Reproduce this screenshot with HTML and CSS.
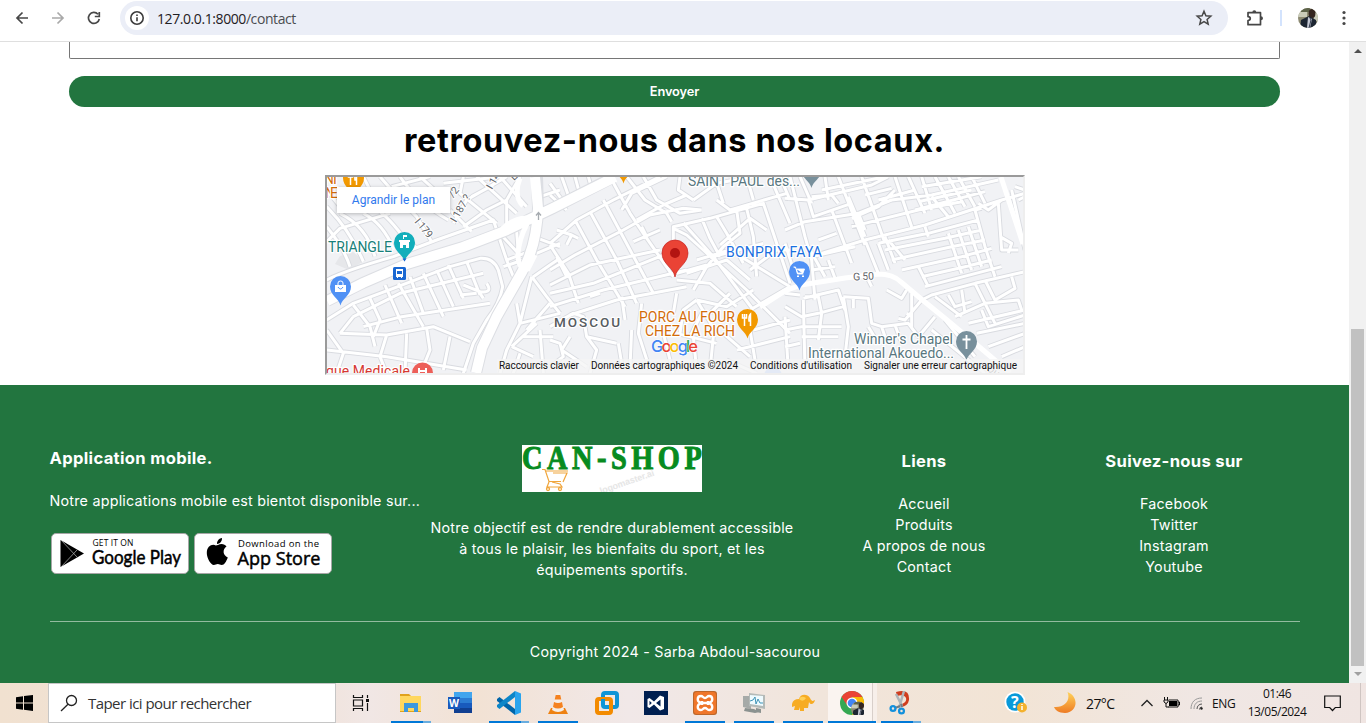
FILE: index.html
```html
<!DOCTYPE html>
<html lang="fr">
<head>
<meta charset="utf-8">
<title>Contact</title>
<link rel="stylesheet" href="styles.css">
</head>
<body>
<header class="toolbar">
  <svg class="nav" width="108" height="36" viewBox="0 0 108 36" fill="none" stroke="#474747" stroke-width="1.7">
    <path d="M28 18H17M22.500 12.500 17 18l5.500 5.500"/>
    <path d="M52 18h11M57.500 12.500 63 18l-5.500 5.500" stroke="#a9a9a9"/>
    <path d="M99.300 19A5.500 5.500 0 1 1 98 14.200M99.300 12v4.500h-4.500"/>
  </svg>
  <div class="address">
    <span class="site-info"><svg width="16" height="16" viewBox="0 0 16 16" fill="none" stroke="#3c3c3c" stroke-width="1.6"><circle cx="8" cy="8" r="6.200"/><path d="M8 7.200v4M8 4.400v1.600"/></svg></span>
    <span class="url">127.0.0.1:8000<i>/contact</i></span>
    <svg class="star" width="18" height="18" viewBox="0 0 18 18"><path d="m9 2.300 1.900 4.500 4.900.4-3.700 3.200 1.100 4.800L9 12.700l-4.200 2.500 1.100-4.800-3.700-3.200 4.900-.4z" fill="none" stroke="#474747" stroke-width="1.500"/></svg>
  </div>
  <svg class="puzzle" width="20" height="20" viewBox="0 0 20 20"><path d="M3 4.700h12.500v12H3v-4.200c3-.2 3-3.600 0-3.800z" fill="none" stroke="#474747" stroke-width="1.700" stroke-linejoin="round"/><path d="M7.300 4.500a2 2.200 0 0 1 4 0zM15.800 8.200a2.200 2 0 0 1 0 4z" fill="#474747"/></svg>
  <span class="divider"></span>
  <svg class="avatar" width="20" height="20" viewBox="0 0 20 20"><use href="#portrait"/></svg>
  <svg class="dots" width="6" height="18" viewBox="0 0 6 18" fill="#474747"><circle cx="3" cy="3.500" r="1.600"/><circle cx="3" cy="9" r="1.600"/><circle cx="3" cy="14.500" r="1.600"/></svg>
</header>

<div class="viewport">
  <main class="page">
    <div class="field"></div>
    <button class="send">Envoyer</button>
    <h1>retrouvez-nous dans nos locaux.</h1>
    <div class="map">
      <svg width="696" height="196" viewBox="327 177 696 196">
        <defs>
          <g id="portrait">
            <clipPath id="round"><circle cx="10" cy="10" r="10"/></clipPath>
            <g clip-path="url(#round)"><path fill="#8c8a72" d="M0 0h20v20H0z"/><path fill="#c9cbb8" d="M0 2h9v7H0zM16 5h4v8h-4z"/><path fill="#5d6349" d="M3 0h9v4H3z"/><ellipse cx="14" cy="5.500" rx="3.400" ry="4.500" fill="#34251f"/><path d="M2 20l1-8 8-4 7 4 1 8z" fill="#1c2532"/><path d="m10 9 4 2-2 9H9z" fill="#c5c9d5"/><path d="m12 10 1 2-2 8" stroke="#30394a" fill="none"/></g>
          </g>
          <g id="minor">
            <g transform="translate(320 170) scale(.33333)">
              <path d="M20 170Q70 230 90 290M20 110Q90 180 130 275M20 215L60 175 210 130M60 130Q140 170 165 260M130 130Q190 160 222 240M180 125Q215 150 275 235M20 60L60 110M130 20L150 60M180 20Q240 90 290 140L335 215M240 20Q290 95 385 150M300 20L350 65M215 50L330 20M430 20L420 70 530 160M370 40L540 20M400 160L440 90 560 20M430 170L500 120 560 90M470 20L590 130M455 80L520 45M390 120L455 185M540 20L620 110M600 20L560 90 560 160"/>
              <path d="M20 330Q80 300 220 260L350 210 520 150 530 180M290 235L275 220M20 450L100 400 220 355 390 290 480 265Q520 262 535 300L548 350Q540 400 500 450L460 520 430 610M590 185L595 250 530 180 560 270 640 240M550 290L610 270M560 270L580 320"/>
              <path d="M100 405L150 470 165 530M150 385L180 450 160 500M195 345L245 460M235 340L310 470M270 320L310 430M310 310L370 440M350 300L400 410M385 285L430 385M440 275L480 375M100 440L240 370 490 310M130 470L245 440 510 400M60 490L100 440M20 480L70 550 50 610M60 490L200 495 340 470 450 515M20 540L200 560 440 600M200 495L180 560 200 610M260 490L255 610M320 475L330 540 310 590M390 500L370 600M430 345L480 365Q520 370 500 340M420 375L470 370M480 370L490 385"/>
              <path d="M640 320L690 285 720 265M635 320L680 380 720 430M635 320L610 420 600 460M590 400L600 460M600 460L720 430M600 460L560 540 540 610M575 530L650 460M575 530L640 560M600 550L580 610M660 480L670 610M610 500L700 500M690 400L620 480M650 250L720 220M640 200L720 230M660 80L720 60"/>
            </g>
            <g transform="translate(550 170) scale(.33333)">
              <path d="M0 75L50 120M0 40L40 95M35 20L60 90M75 20L90 75M115 20L125 55M0 220L80 150 190 90 330 20M20 180L65 195 85 205M65 195L50 225M0 300L75 255 220 180 300 135 400 115 455 120M0 345L120 285 330 240M0 370L130 340 390 235M0 410L160 360 410 300M60 435L200 390 410 350M75 150L140 270 225 410M0 225L55 310 85 400M120 125L200 270 260 400M160 90L310 370M180 20L240 130 280 190 370 320M230 20L285 90 350 130 365 155M280 20L320 90 390 130 455 120M215 120L245 70 350 20M260 150L340 105 410 75M250 215L330 180M275 170L290 200M390 20L385 60 430 90M20 260L50 320M120 380L150 370M215 380L225 450"/>
              <path d="M370 210V170L480 145 640 100 670 190 720 340M370 175L410 195 460 240 590 360 720 490M400 160L490 260 610 420M455 145L480 205 510 260M500 140L530 190 580 280M560 120L570 190 520 230 470 290 430 360M590 115L610 200 620 320M510 225L600 145 650 180M490 260L640 220M440 270L540 240 720 350M470 285L380 310M410 310L530 270 600 330M380 330L480 340 560 410M600 300L680 240 720 240M610 360L530 410 440 390M440 390L500 490M460 420L420 500M540 370L480 430M600 420L720 350M610 480L720 450M520 490L600 560M560 540L720 500M530 570L620 610M600 480L620 600M430 90L500 40 610 20M500 90L540 120 710 70M500 40L520 100M590 20L610 90M660 20L720 160M690 20L720 90"/>
              <path d="M0 470L70 430 100 440 110 500 140 540 120 610M0 510L30 520 40 560 0 590M60 500L35 540 110 590M110 500L200 520M205 520L215 580M245 480L240 590M275 400L265 490 300 600M380 370L370 430M440 390L400 420 390 490M340 490L370 610M380 490L500 520M430 500L440 600M490 500L480 600"/>
            </g>
            <g transform="translate(785 170) scale(.33333)">
              <path d="M15 20L60 200 80 270 90 390M0 85L70 90 260 45 310 20M70 90L85 140 200 100M80 80L140 75 160 100M45 20L80 100M120 20L130 90M160 20L240 225M110 60L300 20M190 80L240 200M230 20L300 220M0 180L60 155 220 130 320 90 440 75 640 30M100 210L155 190M110 250L240 210 420 165 650 90 720 70M140 120L200 280M80 260L210 230M70 230L120 320M200 145L280 110 330 60M220 130L240 180M240 210L280 310M200 170L400 120 530 95M330 20L380 170M370 20L420 130M410 20L440 120M450 20L510 130M490 20L540 110M520 20L570 110M560 20L600 100M240 75L320 55M280 90L390 60M400 95L560 60M390 120L600 65M410 50L590 20M440 80L490 140M650 90L610 120 580 100M590 115L570 120 600 230 630 320M640 100L650 240 700 240M645 200L680 220 670 250M420 170L430 200M280 220L310 300M300 200L330 280M310 210L360 270M280 220L430 190 580 150M300 240L480 205 590 180M320 270L500 230 600 210M350 300L530 260 620 235M410 320L540 290 620 270M420 350L650 290M400 290L430 350M490 190L530 310M520 180L560 300M550 170L590 290"/>
              <path d="M410 390L440 375 570 340 720 305M450 380L530 440M490 375L510 410 560 395M530 360L540 430M570 340L630 460M600 330L630 390 690 355 680 320M510 440L600 400 700 390 710 420M590 420L610 470 720 435M550 460L720 420M575 490L720 460M610 530L720 490M650 560L720 530M410 390L360 450 340 445M380 370V470M305 360L350 385 365 360M365 430L380 440M450 440L400 500 370 460 290 470 260 460 250 385 175 380M205 385V415M175 380L190 470 180 560M55 385L160 360 180 420M0 410L50 440 100 430 175 410M60 380L100 380 110 430 100 510M0 480L50 470 170 470M50 500L160 500M0 530L45 520M55 390L60 600M0 440L10 600M250 470L280 520M290 470L300 500M330 465L350 520M250 330L260 350M130 270L150 325M0 220L40 345M80 300L150 290M0 370L45 375M480 450L570 560M440 480L600 610"/>
              <path d="M680 60L720 240M700 90L720 80M690 50L720 60"/>
            </g>
          </g>
        </defs>
        <path fill="#f1f2f5" d="M327 177h696v196H327z"/>
        <path fill="#e6e7ea" d="m340 256 13-4 11 9-15 9-14-6z"/>
        <use href="#minor" class="road road-edge"/>
        <use href="#minor" class="road"/>
        <g class="major">
          <path class="edge" d="M327 301 363 283 407 264 463 247 505 231 553 208 610 179M537 177 538 208Q537 245 522 272L497 316 482 348 476 373"/>
          <path d="M327 301 363 283 407 264 463 247 505 231 553 208 615 177M535 177 538 208Q537 245 522 272L497 316 482 348 476 373"/>
          <path class="medium" d="M785 291 801 285 845 278 878 274Q893 274 901 282L920 298 947 320 983 350 1010 373M1001 177 1023 244M760 307 785 291M502 229Q512 219 526 218"/>
          <path d="M520 178q-7 18 3 28M527 224q-8 15-9 30 0 16 10 15l7-14" class="medium"/>
        </g>
        <path d="M538.500 220v-7m-2.500 2.500 2.500-3 2.500 3" stroke="#a6abb0" fill="none" stroke-width="1.300"/>
        <g class="street">
          <text transform="translate(414 222) rotate(50)" textLength="22">I 179</text>
          <text transform="translate(456 223) rotate(-60)" textLength="30">I 187 ?</text>
          <text transform="translate(453 198) rotate(-50)" textLength="10">/2</text>
          <text transform="translate(492 190) rotate(-60)" textLength="23">I 145</text>
          <text transform="translate(514 181) rotate(-45)">L</text>
          <text x="853" y="280" textLength="21" transform="rotate(-3 863 276)">G 50</text>
          <text x="986" y="370" transform="rotate(35 986 370)">Ou</text>
        </g>
        <g class="place">
          <g fill="#d26c0a"><text x="324" y="184" textLength="15">NT</text><text x="325" y="198" textLength="13">NE</text><text x="639" y="322" textLength="96">PORC AU FOUR</text><text x="645" y="336" textLength="90">CHEZ LA RICH</text></g>
          <g fill="#188079"><text x="328" y="252" textLength="64">TRIANGLE</text></g>
          <g fill="#196fe0"><text x="726" y="257" textLength="96">BONPRIX FAYA</text></g>
          <g fill="#597780"><text x="688" y="186" textLength="112">SAINT PAUL des...</text><text x="854" y="344" textLength="99">Winner's Chapel</text><text x="808" y="358" textLength="146">International Akouedo...</text></g>
          <g fill="#d63832"><text x="326" y="376" textLength="84">que Medicale</text></g>
          <text x="554" y="327" textLength="66" class="district">MOSCOU</text>
        </g>
        <defs><path id="pin" d="M0 19C-1.500 12-10.500 9-10.500 0a10.500 10.500 0 0 1 21 0C10.500 9 1.500 12 0 19z"/></defs>
        <use href="#pin" fill="#12aebb" x="404.500" y="242.500"/><path d="M402.500 258.500h4l-2 3z" fill="#1967d2"/><path d="M399 240h11v2h-1v6h-3v-3h-3v3h-3v-6h-1zM403 239v-4h4v2h-3v2z" fill="#fff"/>
        <use href="#pin" fill="#5091f5" x="340.500" y="286.500"/><path d="M335 285h11v7h-11z" fill="#fff"/><path d="M338 285v-2a2.500 2 0 0 1 5 0v2" stroke="#fff" fill="none"/><path d="M338 287q2.500 4 5 0" stroke="#5091f5" fill="none"/>
        <use href="#pin" fill="#5091f5" x="799.500" y="271.500"/><path d="M793.500 267h2l2 7h6M796.500 269h8l-1.500 4h-5.500z" stroke="#fff" stroke-width=".9" fill="#fff"/><path d="M797 275.500h2v1.500h-2zM802 275.500h2v1.500h-2z" fill="#fff"/>
        <use href="#pin" fill="#f29900" x="747.500" y="319.500"/><g id="fork" stroke="#fff" fill="none" stroke-width="1.500"><path d="M742.500 314v4h4v-4M744.500 314v12M750.500 326v-12q-2 2-1.500 7h1.500"/></g>
        <use href="#pin" fill="#f29900" x="353.500" y="178"/><use href="#fork" x="-394" y="-141"/>
        <use href="#pin" fill="#f29900" x="623.500" y="164.500"/><use href="#pin" fill="#78909c" x="811.500" y="169"/>
        <use href="#pin" fill="#78909c" x="966.500" y="341.500"/><path d="M966.500 335v14M962.500 339.500h8" stroke="#fff" stroke-width="1.800"/>
        <use href="#pin" fill="#ed5f59" x="422.500" y="373"/><path d="M419 368v8m7-8v8m-7-5h7" stroke="#fff" stroke-width="2"/>
        <circle cx="773" cy="376" r="9" fill="#a9c5fa"/>
        <rect x="393" y="267" width="13" height="13" rx="1.500" fill="#1967d2"/><path d="M396 269h7v8h-1v1h-1v-1h-3v1h-1v-1h-1z" fill="#fff"/><path d="M397 271h5v3h-5z" fill="#1967d2"/>
        <path d="M675 277C674 268 662 264 662 253a13 13 0 0 1 26 0C688 264 676 268 675 277z" fill="#ea4335" stroke="#c5221f" stroke-width=".7"/><circle cx="675" cy="253" r="5" fill="#b31412"/>
        <text class="google" x="651" y="351.500" textLength="47"><tspan fill="#4285f4">G</tspan><tspan fill="#ea4335">o</tspan><tspan fill="#fbbc04">o</tspan><tspan fill="#4285f4">g</tspan><tspan fill="#34a853">l</tspan><tspan fill="#ea4335">e</tspan></text>
        <path d="M497 359h526v14H497z" fill="#f5f5f5" opacity=".78"/>
        <g class="legal"><text x="499" y="369" textLength="80">Raccourcis clavier</text><text x="591" y="369" textLength="147">Données cartographiques ©2024</text><text x="750" y="369" textLength="102">Conditions d'utilisation</text><text x="864" y="369" textLength="153">Signaler une erreur cartographique</text></g>
      </svg>
      <a class="enlarge">Agrandir le plan</a>
    </div>
    <footer>
      <div class="columns">
        <section class="apps">
          <h3>Application mobile.</h3>
          <p>Notre applications mobile est bientot disponible sur...</p>
          <div class="badges">
            <svg width="138" height="41" viewBox="0 0 138 41"><rect x=".5" y=".5" width="137" height="40" rx="4.500" fill="#fff" stroke="#a6a6a6"/><path d="M9.500 7 33 20.500 9.500 34z"/><path d="m10 7 16 17M10 34 26 17" stroke="#bbb" stroke-width=".7"/><text x="41.500" y="13" font-size="8.500" textLength="41">GET IT ON</text><text x="41" y="31" class="brand" textLength="89" lengthAdjust="spacingAndGlyphs">Google Play</text></svg>
            <svg width="138" height="41" viewBox="0 0 138 41"><rect x=".5" y=".5" width="137" height="40" rx="4.500" fill="#fff" stroke="#a6a6a6"/><path d="M24 12c3-2 7-1 8.500 1.500-4.500 3-3.500 9 1.300 11-1.500 4-3.500 7.500-6 7.500-1.800 0-2.300-1-4-1s-2.300 1-4 1c-3 0-7-7-7-12 0-7 5.500-9.500 9-7.500zM23 11c-.2-3.300 2.500-5.800 5-6 .3 3-2.200 6-5 6z"/><text x="44" y="13.500" font-size="9.500" textLength="81">Download on the</text><text x="43.500" y="32" class="brand store" textLength="83" lengthAdjust="spacingAndGlyphs">App Store</text></svg>
          </div>
        </section>
        <section class="about">
          <svg class="logo" width="180" height="47" viewBox="0 0 180 47"><path fill="#fff" d="M0 0h180v47H0z"/><text x="0" y="23.500" class="logo-name" textLength="209" transform="scale(.86 1)">CAN-SHOP</text><path d="M20 24.500h3l4 12h12M46 26H24M31 28h14l-4 9M27 37l-2 5h15l-2-3-8-2" fill="none" stroke="#f0a63c" stroke-width="1.200"/><g fill="none" stroke="#f0a63c" stroke-width="1.300"><circle cx="26" cy="44" r="1.500"/><circle cx="38" cy="44" r="1.500"/></g><text x="79" y="49" transform="rotate(-19 79 49)" class="mark" textLength="57">logomaster.ai</text></svg>
          <p>Notre objectif est de rendre durablement accessible<br>à tous le plaisir, les bienfaits du sport, et les<br>équipements sportifs.</p>
        </section>
        <section class="list"><h3>Liens</h3><ul><li>Accueil</li><li>Produits</li><li>A propos de nous</li><li>Contact</li></ul></section>
        <section class="list"><h3>Suivez-nous sur</h3><ul><li>Facebook</li><li>Twitter</li><li>Instagram</li><li>Youtube</li></ul></section>
      </div>
      <hr>
      <p class="copyright">Copyright 2024 - Sarba Abdoul-sacourou</p>
    </footer>
  </main>
  <div class="scrollbar"><i class="up"></i><span class="thumb"></span><i class="down"></i></div>
</div>

<div class="taskbar">
  <div class="start"><svg width="17" height="16" viewBox="0 0 17 16"><path d="M0 2.300 7 1.300V7.500H0zM8 1.100 17 0v7.500H8zM0 8.500h7v6.200l-7-1zM8 8.500h9V16l-9-1.300z"/></svg></div>
  <div class="search"><svg width="18" height="18" viewBox="0 0 18 18" fill="none" stroke="#222" stroke-width="1.300"><circle cx="11.500" cy="6.500" r="5"/><path d="M8 10.300 1 17"/></svg><span>Taper ici pour rechercher</span></div>
  <div class="taskview"><svg width="18" height="16" viewBox="0 0 18 16" fill="none" stroke="#111" stroke-width="1.200"><path d="M1.500 0v2.500h9V0M1.500 16v-2.500h9V16M1.500 5h9v6h-9zM15.500 0v3M15.500 8v8"/><path d="M14 4h3v3h-3z" fill="#111" stroke="none"/></svg></div>
  <div class="apps-row">
    <div class="app open stacked"><svg viewBox="0 0 24 24"><path d="M1 3h9l2 2h10v16H1z" fill="#e0a21c"/><path d="M1 5h21v15H1z" fill="#ffd75e"/><path d="M5 21v-9h14v9h-4v-4H9v4z" fill="#3d98dd"/></svg></div>
    <div class="app"><svg viewBox="0 0 24 24"><path fill="#41a5ee" d="M6 1h18v6H6z"/><path fill="#2b7cd3" d="M6 7h18v5H6z"/><path fill="#185abd" d="M6 12h18v5H6z"/><path fill="#103f91" d="M6 17h18v5H6z"/><path fill="#185abd" d="M0 6h12v12H0z"/><text x="1" y="16" fill="#fff" font-size="11" font-weight="700" textLength="10" lengthAdjust="spacingAndGlyphs">W</text></svg></div>
    <div class="app open stacked"><svg viewBox="0 0 24 24"><path d="m0 8 2.500-2L18 18v6L0 10z" fill="#0065a9"/><path d="m0 16 2.500 2L18 6V0L0 14z" fill="#0d86c8"/><path d="m18 0 6 2.500v19L18 24z" fill="#29a4ee"/></svg></div>
    <div class="app open"><svg viewBox="0 0 24 24"><path d="M5 17h14l3 6H2z" fill="#ee8111"/><path d="M10.500 1h3L18 19q-6 4-12 0z" fill="#f5eee7"/><path d="m9.700 4-1 4.500h6.600l-1-4.500zM8 11l-1 5q5 3 10 0l-1-5q-4 2-8 0z" fill="#f58220"/></svg></div>
    <div class="app"><svg viewBox="0 0 24 24" fill="none" stroke-width="4"><rect x="8" y="2" width="14" height="14" rx="2" stroke="#0f95d7"/><rect x="2" y="8" width="14" height="14" rx="2" stroke="#f38b00"/><path d="M8 8v5" stroke="#0f95d7"/></svg></div>
    <div class="app"><svg viewBox="0 0 24 24"><path fill="#001f50" d="M0 0h24v24H0z"/><path d="m3.500 8 2-1L10 10.500 16 4.500 20 6v12l-4 1.500-6-6L5.500 17l-2-1z" fill="#fff"/><path d="M5.500 9.800v4.400L7.800 12zM16.500 8.500v7L12 12z" fill="#001f50"/></svg></div>
    <div class="app open"><svg viewBox="0 0 24 24"><rect width="24" height="24" rx="3" fill="#bd6729"/><rect x="1" y="1" width="22" height="22" rx="3" fill="#ef762a"/><path d="M9 12c-6-1-5-7-1-7 2 0 2 2 4 2s2-2 4-2c4 0 5 6-1 7 6 1 5 7 1 7-2 0-2-2-4-2s-2 2-4 2c-4 0-5-6 1-7zM9 10v4m6-4v4m-6-2h6" fill="none" stroke="#fff" stroke-width="2.400"/></svg></div>
    <div class="app open"><svg viewBox="0 0 24 24"><path d="M1 5h8v13l-8-2z" fill="#a6aaa8"/><path d="M7 2l16 2v14L7 15z" fill="#b4bab8"/><path d="m8 4 13 1v10L8 13z" fill="#effbff"/><path d="m8 10 3-1 2-3 1 7 2-5 2 4h3" fill="none" stroke="#4194b7"/><path d="m3 17 9 1 6 3-5 1-11-2zM14 17l5 1v4l-5-1z" fill="#8b9290"/></svg></div>
    <div class="app open"><svg viewBox="0 0 24 24"><path d="M1 13q1-5 7-5c1-5 8-6 11-1 2 4 3 3 5 2-1 5-5 5-6 2l-1 6h-4v3H9v-4l-1 3H3l1-4-3 1z" fill="#f7ac24"/><path d="M8 8q4 4 7-1-5-3-7 1z" fill="#ffd057"/></svg></div>
    <div class="app open active"><svg viewBox="0 0 24 24"><circle cx="12" cy="12" r="12" fill="#34a853"/><path d="M1.600 6A12 12 0 0 1 22.400 6H12l-5 8z" fill="#ea4335"/><path d="M22.400 6A12 12 0 0 1 12 24l5-9-5-9z" fill="#fbbc04"/><circle cx="12" cy="12" r="5.500" fill="#fff"/><circle cx="12" cy="12" r="4.300" fill="#4285f4"/><g transform="translate(11 10.500) scale(.75)"><use href="#portrait"/></g></svg></div>
    <div class="app open stacked"><svg viewBox="0 0 24 24"><path d="M7 1q14-4 13 8-1 6-8 7l1-3q5-2 4-6-2-4-9-2z" fill="#cf3d1e"/><path d="M7 3 13 15M15 0 10 17" stroke="#aeb4b8" stroke-width="2.500"/><path d="m12 13 1 3m-2-1-5 2" stroke="#727d84" stroke-width="2"/><g fill="none" stroke="#1390dc" stroke-width="2.300"><circle cx="4" cy="17.500" r="2.400"/><circle cx="12.500" cy="20" r="2.400"/></g></svg></div>
  </div>
  <div class="tray">
    <svg class="help" width="24" height="24" viewBox="0 0 24 24"><circle cx="11" cy="11" r="10.500" fill="#fff"/><circle cx="11" cy="11" r="8.700" fill="#0899d9"/><text x="7" y="16.500" fill="#fff" font-size="16" font-weight="700">?</text><circle cx="18" cy="16.500" r="5" fill="#f4b22d"/><path d="M18 15v4m0-6v1" stroke="#fff" stroke-width="1.500"/></svg>
    <svg class="moon" width="24" height="24" viewBox="0 0 24 24"><defs><linearGradient id="glow" x2="0" y2="1"><stop stop-color="#ffd35a"/><stop offset="1" stop-color="#ee7b24"/></linearGradient></defs><path d="M14.500 1C27 6 24 22 12 22 6 22 2 19 1 16c10 1 17-6 13.500-15z" fill="url(#glow)"/></svg>
    <span class="temp">27°C</span>
    <svg class="caret" width="12" height="8" viewBox="0 0 12 8"><path d="m.5 7 5.500-5.500L11.500 7" fill="none" stroke="#222" stroke-width="1.300"/></svg>
    <svg class="battery" width="17" height="12" viewBox="0 0 17 12"><path d="M5.500 3h9.500v7H5.500M15 5h1.500v3H15" fill="none" stroke="#111"/><path d="M6 4h8v5H6z"/><path d="M1.500 0v3m3-3v3M1 3h4v2L3 6.500 1 5zM3 6v4h3" fill="none" stroke="#111"/></svg>
    <svg class="wifi" width="13" height="13" viewBox="0 0 13 13" fill="none" stroke="#999"><path d="M1 12C1 5 5 1 12 1M4 12c0-5 3-8 8-8"/><path d="M7 12c0-3 2-5 5-5M9.500 12.500q0-2.500 2.500-2.500" stroke="#555"/><circle cx="11.500" cy="11.500" r="1.200" fill="#222" stroke="none"/></svg>
    <span class="lang">ENG</span>
    <div class="clock"><span>01:46</span><span>13/05/2024</span></div>
    <svg class="notif" width="17" height="17" viewBox="0 0 17 17"><path d="M.7 1h15.600v11.500h-5L8.500 15.500l-2.800-3h-5z" fill="none" stroke="#111" stroke-width="1.200"/></svg>
    <span class="peek"></span>
  </div>
</div>
</body>
</html>
```
FILE: styles.css
```css
* { box-sizing: border-box; }
body { margin: 0; width: 1366px; height: 723px; overflow: hidden; display: flex; flex-direction: column; background: #fff; font-family: Inter, sans-serif; }
svg { display: block; flex: none; }
h1, h3, p, ul { margin: 0; padding: 0; }

.toolbar { height: 42px; flex: none; display: flex; align-items: center; padding-bottom: 5px; border-bottom: 1px solid #dfdfdf; }
.nav { margin-right: 12px; }
.address { width: 1108px; height: 34px; border-radius: 17px; background: #ebeef7; display: flex; align-items: center; padding-left: 5px; }
.site-info { width: 24px; height: 24px; border-radius: 50%; background: #fff; display: grid; place-items: center; }
.url { margin-left: 8px; font: 14px "Open Sans", sans-serif; letter-spacing: -0.42px; color: #1f2023; white-space: nowrap; }
.url i { font-style: normal; color: #4a4c50; }
.star { margin-left: auto; margin-right: 15px; }
.puzzle { margin-left: 17px; }
.divider { width: 2px; height: 16px; margin-left: 15px; background: #d3e3fd; }
.avatar { margin-left: 16px; }
.dots { margin-left: 23px; }

.viewport { height: 641px; flex: none; display: flex; }
.page { width: 1349px; display: flex; flex-direction: column; align-items: center; }
.field { width: 1211px; height: 17px; border: 1px solid #767676; border-top: 0; border-radius: 0 0 2px 2px; }
.send { width: 1211px; height: 31px; margin-top: 17px; border: 0; border-radius: 16px; background: #22753f; color: #fff; font: 600 12.800px/31px Inter, sans-serif; letter-spacing: -.1px; padding: 0; }
h1 { margin-top: 10px; height: 48px; font-size: 32.500px; font-weight: 700; line-height: 48px; letter-spacing: 0.600px; white-space: nowrap; }
.map { position: relative; width: 700px; height: 200px; margin-top: 10px; border: 2px solid #eee; border-top-color: #9a9a9a; border-left-color: #9a9a9a; }
.map svg { font-family: Roboto, sans-serif; overflow: hidden; }
.enlarge { position: absolute; left: 10px; top: 10px; width: 113px; height: 26px; padding-left: 1px; background: #fff; box-shadow: 0 1px 4px rgba(0,0,0,.25); color: #3079ed; font: 12px/26px Roboto, sans-serif; text-align: center; }
.road { fill: none; stroke: #fff; stroke-width: 9px; stroke-linejoin: round; }
.road-edge { stroke: #d9dbe0; stroke-width: 14.500px; }
.major path { fill: none; stroke: #fff; stroke-width: 10px; }
.major .edge { stroke: #dcdee3; stroke-width: 12px; }
.major .medium { stroke-width: 5px; }
.place { font-size: 14px; stroke: #fff; stroke-width: 2.500px; paint-order: stroke; stroke-linejoin: round; }
.place .district { fill: #565b60; font-size: 13.500px; font-weight: 500; }
.street { font-size: 10.500px; fill: #5f6469; stroke: #fff; stroke-width: 2px; paint-order: stroke; }
.google { font: 500 16.500px Inter, sans-serif; stroke: #fff; stroke-width: 1px; paint-order: stroke; }
.legal { font-size: 10px; fill: #111; }

footer { width: 1349px; height: 298px; margin-top: 10px; padding: 60px 49px 0 50px; background: #22753f; color: #fff; font-size: 14.300px; line-height: 21px; letter-spacing: .23px; }
.columns { display: grid; grid-template-columns: 370px 384px 240px 260px; height: 176px; }
footer h3 { font-size: 16.600px; line-height: 26px; font-weight: 700; letter-spacing: .32px; white-space: nowrap; }
footer p { white-space: nowrap; }
footer svg { letter-spacing: 0; }
.apps h3, .apps p { margin-left: -.5px; }
.apps p { margin-top: 19px; }
.badges { display: flex; gap: 5px; padding-left: 1px; margin-top: 22px; }
.badges text { font-family: "Open Sans", sans-serif; }
.badges .brand { font-family: Lato, sans-serif; font-size: 19px; stroke: #000; stroke-width: .5px; }
.badges .store { font-family: "Open Sans", sans-serif; }
.about { display: flex; flex-direction: column; align-items: center; text-align: center; }
.about p { margin-top: 25px; }
.logo-name { font: 700 33px "Liberation Serif", serif; fill: #078b20; stroke: #078b20; stroke-width: 1px; }
.mark { font: 700 9px "Liberation Sans", sans-serif; fill: #e6e6e6; }
.list { text-align: center; padding-top: 3px; }
.list ul { list-style: none; margin-top: 19px; }
hr { margin: 0; border: 0; height: 1px; background: #93bb9f; }
.copyright { margin-top: 19px; text-align: center; }

.scrollbar { width: 17px; background: #f1f1f1; display: flex; flex-direction: column; align-items: center; }
.scrollbar i { border: 4px solid transparent; width: 0; }
.scrollbar .up { border-top: 0; border-bottom-color: #505050; margin-top: 7px; }
.thumb { width: 13px; height: 337px; margin-top: 276px; background: #c1c1c1; }
.scrollbar .down { border-bottom: 0; border-top-color: #a0a0a0; margin-top: 6px; }

.taskbar { height: 40px; flex: none; display: flex; background: linear-gradient(90deg, #f1e1d0 0, #f0e2d9 22%, #f1e7e5 27%, #f2e2d4 35%, #f1e8e8 46%, #f1e5db 60%, #f2e4d5 74%, #f0e7e4 88%, #f0e5e2 100%); font-family: "Open Sans", sans-serif; color: #111; }
.start { width: 48px; display: grid; place-items: center; }
.search { width: 288px; border: 1px solid #c6c6c6; background: #fff; display: flex; align-items: center; padding-left: 11px; font-size: 15px; letter-spacing: -.55px; white-space: nowrap; color: #333; }
.search span { margin-left: 10px; }
.taskview { width: 51px; padding-right: 2px; display: grid; place-items: center; }
.apps-row { display: flex; }
.app { width: 49px; padding-right: 1px; display: grid; place-items: center; position: relative; }
.app svg { width: 24px; height: 24px; }
.app.open::after { content: ""; position: absolute; left: 4px; bottom: 0; width: 40px; height: 2px; background: #0078d7; }
.app.stacked::after { background: linear-gradient(90deg, #0078d7 80%, #69addf 80%); }
.app.active { background: linear-gradient(90deg, #faf4f0 44.5px, #d8cfca 44.5px 45.500px, #f7efea 45.500px); }
.app.active::after { left: 0; width: 48px; }
.tray { flex: 1; display: flex; align-items: center; white-space: nowrap; padding-left: 78px; }
.moon { margin-left: 25px; }
.temp { margin-left: 9px; font-size: 14px; width: 31px; letter-spacing: -.6px; }
.caret { margin-left: 24px; }
.battery { margin-left: 10px; }
.wifi { margin-left: 10px; }
.lang { margin-left: 9px; width: 25px; font-size: 12px; letter-spacing: -.4px; }
.clock { width: 60px; margin-left: 10px; display: flex; flex-direction: column; align-items: center; font-size: 12px; line-height: 18px; letter-spacing: -.5px; }
.notif { margin-left: 17px; }
.peek { width: 1px; height: 40px; margin-left: 19px; background: #cfc5c2; }
```
